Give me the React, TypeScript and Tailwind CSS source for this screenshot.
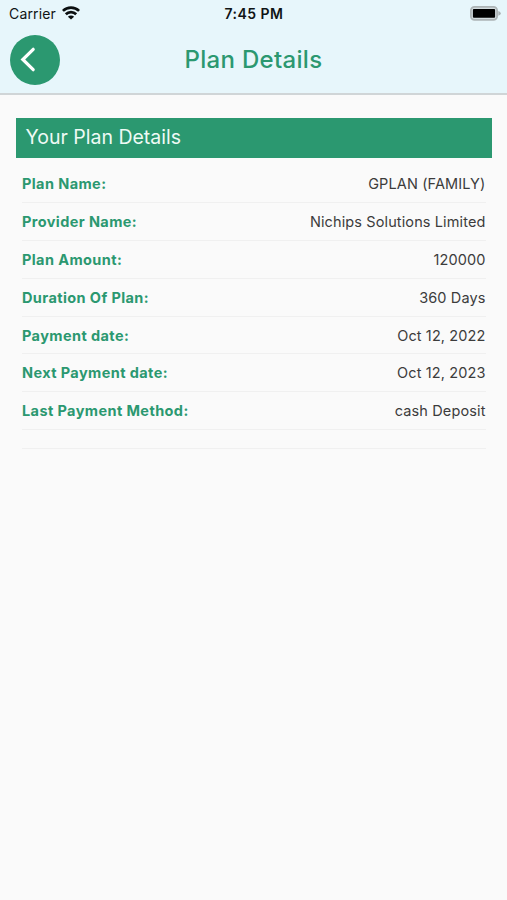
import React from 'react';

const planDetails = [
  { label: 'Plan Name:', value: 'GPLAN (FAMILY)' },
  { label: 'Provider Name:', value: 'Nichips Solutions Limited' },
  { label: 'Plan Amount:', value: '120000' },
  { label: 'Duration Of Plan:', value: '360 Days' },
  { label: 'Payment date:', value: 'Oct 12, 2022' },
  { label: 'Next Payment date:', value: 'Oct 12, 2023' },
  { label: 'Last Payment Method:', value: 'cash Deposit' },
];

const WifiIcon: React.FC = () => (
  <svg width="18" height="14" viewBox="0 0 18 14" fill="none" stroke="#0b0f10" strokeWidth="2.7">
    <path d="M0.9 4.9 A11.6 11.6 0 0 1 17.1 4.9" />
    <path d="M3.8 8.3 A7.4 7.4 0 0 1 14.2 8.3" />
    <path d="M9 13.6 L5.9 10.8 A4.4 4.4 0 0 1 12.1 10.8 Z" fill="#0b0f10" stroke="none" />
  </svg>
);

const BatteryIcon: React.FC = () => (
  <svg width="31" height="15" viewBox="0 0 31 15">
    <rect x="0.9" y="0.9" width="26.2" height="12.9" rx="3.6" fill="#d3dcdf" stroke="#adb4b6" strokeWidth="1.8" />
    <rect x="2.9" y="2.9" width="22.2" height="8.9" rx="1" fill="#000" />
    <path d="M28.3 5 Q30.8 6 30.8 7.4 Q30.8 8.8 28.3 9.8 Z" fill="#a9b1b3" />
  </svg>
);

const StatusBar: React.FC = () => (
  <div className="grid h-[26px] grid-cols-3 items-center pl-[7px] pr-[6px] text-[#101415]">
    <div className="flex items-center gap-[6px] pl-[2px] text-[14px] tracking-[0.15px]">
      <span>Carrier</span>
      <WifiIcon />
    </div>
    <span className="text-center text-[14px] font-semibold tracking-[0.45px]">7:45 PM</span>
    <div className="flex justify-end">
      <BatteryIcon />
    </div>
  </div>
);

const Header: React.FC = () => (
  <header className="h-[95px] border-b-2 border-[#d0d5d7] bg-[#e7f6fb]">
    <StatusBar />
    <div className="grid grid-cols-[50px_1fr_50px] items-center px-[10px] pt-[9px]">
      <button
        aria-label="Back"
        className="flex h-[50px] w-[50px] items-center justify-center rounded-full bg-[#2b9870]"
      >
        <svg width="50" height="50" viewBox="0 0 50 50" fill="none" stroke="#fff" strokeWidth="3.2">
          <path d="M23.2 14.3 L12.8 24.5 L23.2 34.7" strokeLinecap="round" />
        </svg>
      </button>
      <h1 className="text-center text-[24px] font-medium leading-[30px] tracking-[0.3px] text-[#2b9870]">
        Plan Details
      </h1>
    </div>
  </header>
);

const App: React.FC = () => {
  return (
    <div className="min-h-screen bg-[#fafafa] font-['Inter',sans-serif]">
      <Header />

      <main className="pl-4 pr-[15px] pt-[23px]">
        <h2 className="h-10 bg-[#2b9870] pl-[9.5px] text-[19.5px] leading-[39px] text-[#eefaf5]">
          Your Plan Details
        </h2>

        <div className="pl-[6px] pr-[6.5px] pt-[7.4px]">
          {planDetails.map((item) => (
            <div
              key={item.label}
              className="flex h-[37.8px] items-center justify-between border-b border-[#f0f0f0] pt-px text-[14.5px]"
            >
              <span className="font-bold tracking-[0.4px] text-[#2b9870]">{item.label}</span>
              <span className="tracking-[0.12px] text-[#3c3c3c]">{item.value}</span>
            </div>
          ))}
          <div className="h-[19px] border-b border-[#f0f0f0]" />
        </div>
      </main>
    </div>
  );
};

export default App;
